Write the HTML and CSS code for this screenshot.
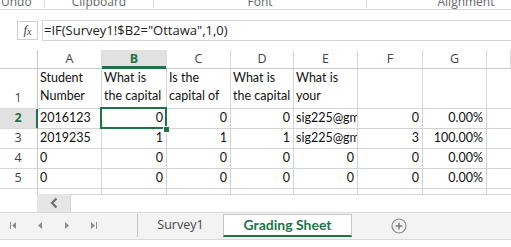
FILE: index.html
```html
<!DOCTYPE html>
<html>
<head>
<meta charset="utf-8">
<link rel="stylesheet" href="styles.css">
</head>
<body>
<div class="ribbon">
  <div class="grp g-undo"><span>Undo</span></div>
  <div class="grp g-clip"><span>Clipboard</span></div>
  <div class="grp g-font"><span>Font</span></div>
  <div class="grp g-align"><span>Alignment</span></div>
</div>
<div class="fbar">
  <div class="fx"><i>f</i><i class="x">x</i></div>
  <div class="formula">=IF(Survey1!$B2="Ottawa",1,0)</div>
</div>
<div class="sheet">
  <div class="ch corner"></div>
  <div class="ch">A</div>
  <div class="ch sel">B</div>
  <div class="ch">C</div>
  <div class="ch">D</div>
  <div class="ch">E</div>
  <div class="ch">F</div>
  <div class="ch">G</div>
  <div class="ch last"></div>

  <div class="rh r1">1</div>
  <div class="c r1">Student<br>Number</div>
  <div class="c r1">What is<br>the capital</div>
  <div class="c r1">Is the<br>capital of</div>
  <div class="c r1">What is<br>the capital</div>
  <div class="c r1">What is<br>your</div>
  <div class="c r1"></div>
  <div class="c r1"></div>
  <div class="c r1 last"></div>

  <div class="rh sel">2</div>
  <div class="c">2016123</div>
  <div class="c n active">0<span class="selbox"></span><span class="handle"></span></div>
  <div class="c n">0</div>
  <div class="c n">0</div>
  <div class="c">sig225@gmail.com</div>
  <div class="c n">0</div>
  <div class="c n">0.00%</div>
  <div class="c last"></div>

  <div class="rh">3</div>
  <div class="c">2019235</div>
  <div class="c n">1</div>
  <div class="c n">1</div>
  <div class="c n">1</div>
  <div class="c">sig225@gmail.com</div>
  <div class="c n">3</div>
  <div class="c n">100.00%</div>
  <div class="c last"></div>

  <div class="rh">4</div>
  <div class="c">0</div>
  <div class="c n">0</div>
  <div class="c n">0</div>
  <div class="c n">0</div>
  <div class="c n">0</div>
  <div class="c n">0</div>
  <div class="c n">0.00%</div>
  <div class="c last"></div>

  <div class="rh">5</div>
  <div class="c">0</div>
  <div class="c n">0</div>
  <div class="c n">0</div>
  <div class="c n">0</div>
  <div class="c n">0</div>
  <div class="c n">0</div>
  <div class="c n">0.00%</div>
  <div class="c last"></div>

  <div class="rh stub"></div>
  <div class="c stub"></div>
  <div class="c stub"></div>
  <div class="c stub"></div>
  <div class="c stub"></div>
  <div class="c stub"></div>
  <div class="c stub"></div>
  <div class="c stub"></div>
  <div class="c stub last"></div>
</div>
<div class="hscroll">
  <div class="hs-pad"></div>
  <div class="hs-btn"><svg width="10" height="12" viewBox="0 0 10 12"><path d="M7.5 1.5 L3 6 L7.5 10.5" fill="none" stroke="#6e6e6e" stroke-width="2.2"/></svg></div>
  <div class="hs-track"></div>
</div>
<div class="tabbar">
  <div class="nav">
    <span class="nb"><svg width="8" height="9" viewBox="0 0 8 9"><rect x="1" y="1" width="1" height="7" fill="#8c8c8c"/><path d="M7 1 L3 4.5 L7 8 Z" fill="#8c8c8c"/></svg></span>
    <span class="nb"><svg width="8" height="9" viewBox="0 0 8 9"><path d="M6 1 L2 4.5 L6 8 Z" fill="#8c8c8c"/></svg></span>
    <span class="nb"><svg width="8" height="9" viewBox="0 0 8 9"><path d="M2 1 L6 4.5 L2 8 Z" fill="#8c8c8c"/></svg></span>
    <span class="nb"><svg width="8" height="9" viewBox="0 0 8 9"><path d="M1 1 L5 4.5 L1 8 Z" fill="#8c8c8c"/><rect x="6" y="1" width="1" height="7" fill="#8c8c8c"/></svg></span>
  </div>
  <div class="tab">Survey1</div>
  <div class="tab active">Grading Sheet</div>
  <div class="add"><svg width="16" height="16" viewBox="0 0 16 16"><circle cx="8" cy="8" r="7" fill="none" stroke="#8a8a8a" stroke-width="1.2"/><path d="M8 4.5 V11.5 M4.5 8 H11.5" stroke="#7a7a7a" stroke-width="1.4"/></svg></div>
</div>
</body>
</html>
```
FILE: styles.css
```css
html, body {
  margin: 0;
  padding: 0;
  background: #ffffff;
}
body {
  width: 511px;
  height: 247px;
  overflow: hidden;
  font-family: "Open Sans", "Noto Sans", sans-serif;
  color: #222;
}
.ribbon {
  display: flex;
  height: 9px;
  border-bottom: 1px solid #d6d6d6;
  overflow: hidden;
  background: #ffffff;
}
.grp {
  flex: none;
  height: 7px;
  border-right: 1px solid #d6d6d6;
  display: flex;
  justify-content: center;
  overflow: visible;
}
.grp span {
  font-size: 12px;
  line-height: 12px;
  margin-top: -4px;
  color: #666;
  white-space: nowrap;
}
.g-undo { width: 44px; justify-content: flex-start; }
.g-undo span { margin-left: 1px; }
.g-clip { width: 108px; }
.g-font { width: 212px; }
.g-align { width: 198px; border-right: none; }

.fbar {
  display: flex;
  align-items: center;
  height: 40px;
  padding-left: 17px;
}
.fx {
  flex: none;
  width: 19px;
  height: 17px;
  border: 1px solid #cfcfcf;
  display: flex;
  justify-content: center;
  align-items: center;
  font-family: "Liberation Serif", serif;
  font-size: 13px;
  color: #444;
}
.fx i { line-height: 12px; }
.fx .x { font-size: 10px; margin-top: 3px; }
.formula {
  flex: 1;
  margin-left: 4px;
  height: 19px;
  border: 1px solid #d4d4d4;
  border-right: none;
  font-size: 13px;
  line-height: 19px;
  padding-left: 1px;
  color: #222;
  white-space: nowrap;
}

.sheet {
  display: grid;
  grid-template-columns: 38px 64px 65px 64px 63px 64px 65px 64px 1fr;
  grid-template-rows: 19px 40px 20px 20px 20px 20px 5px;
}
.ch {
  border-right: 1px solid #d9d9d9;
  border-bottom: 1px solid #c8c8c8;
  font-size: 12.5px;
  line-height: 18px;
  text-align: center;
  color: #444;
}
.ch.corner { border-right-color: #c8c8c8; }
.ch.sel {
  background: #e1e1e1;
  color: #217346;
  font-weight: 700;
  box-shadow: inset 0 -2px 0 #217346;
  border-bottom-color: #217346;
}
.rh {
  border-right: 1px solid #c8c8c8;
  border-bottom: 1px solid #d9d9d9;
  font-size: 12.5px;
  line-height: 16px;
  color: #444;
  display: flex;
  align-items: flex-end;
  justify-content: center;
  padding-bottom: 2px;
  padding-right: 1px;
}
.rh.sel {
  background: #e1e1e1;
  color: #217346;
  font-weight: 700;
  border-right-color: #217346;
  box-shadow: inset -1px 0 0 #217346;
}
.c {
  position: relative;
  border-right: 1px solid #d4d4d4;
  border-bottom: 1px solid #d4d4d4;
  font-family: "Lato", "Open Sans", sans-serif;
  font-size: 12.5px;
  line-height: 16px;
  padding: 0 3px 2px 2px;
  color: #111;
  white-space: nowrap;
  overflow: hidden;
  display: flex;
  align-items: flex-end;
}
.c.r1 {
  line-height: 18px;
  padding-bottom: 3px;
}
.c.n { justify-content: flex-end; }
.c.last { border-right: none; }
.stub { border-bottom: none; padding: 0; }
.c.active { overflow: visible; z-index: 2; }
.selbox {
  position: absolute;
  left: -2px;
  top: -2px;
  right: -1px;
  bottom: -1px;
  border: 2px solid #217346;
}
.handle {
  position: absolute;
  box-sizing: border-box;
  width: 7px;
  height: 7px;
  right: -4px;
  bottom: -5px;
  background: #217346;
  border: 1px solid #ffffff;
}

.hscroll {
  display: flex;
  height: 18px;
}
.hs-pad { width: 37px; flex: none; }
.hs-btn {
  width: 33px;
  flex: none;
  background: #e6e6e6;
  display: flex;
  align-items: center;
  justify-content: center;
}
.hs-track {
  flex: 1;
  border-top: 1px solid #d4d4d4;
  border-left: 1px solid #d4d4d4;
}

.tabbar {
  display: flex;
  height: 26px;
  border-top: 1px solid #d9d9d9;
  border-bottom: 1px solid #d9d9d9;
  background: #f3f3f3;
}
.nav {
  box-sizing: border-box;
  width: 138px;
  flex: none;
  display: flex;
  padding-left: 9px;
  border-right: 1px solid #c6c6c6;
  margin: 1px 0 2px;
}
.nb {
  width: 27px;
  display: flex;
  align-items: center;
}
.tab {
  flex: none;
  height: 22px;
  margin-top: 1px;
  font-size: 12.5px;
  line-height: 22px;
  color: #444;
  text-align: center;
}
.tab:not(.active) { width: 85px; }
.tab.active {
  box-sizing: border-box;
  width: 129px;
  height: 23px;
  background: #ffffff;
  border: 1px solid #c6c6c6;
  border-bottom: 2px solid #217346;
  color: #217346;
  font-family: "Lato", "Open Sans", sans-serif;
  font-weight: 700;
  font-size: 14px;
  line-height: 20px;
}
.add {
  flex: none;
  margin-left: 39px;
  display: flex;
  align-items: center;
}
```
